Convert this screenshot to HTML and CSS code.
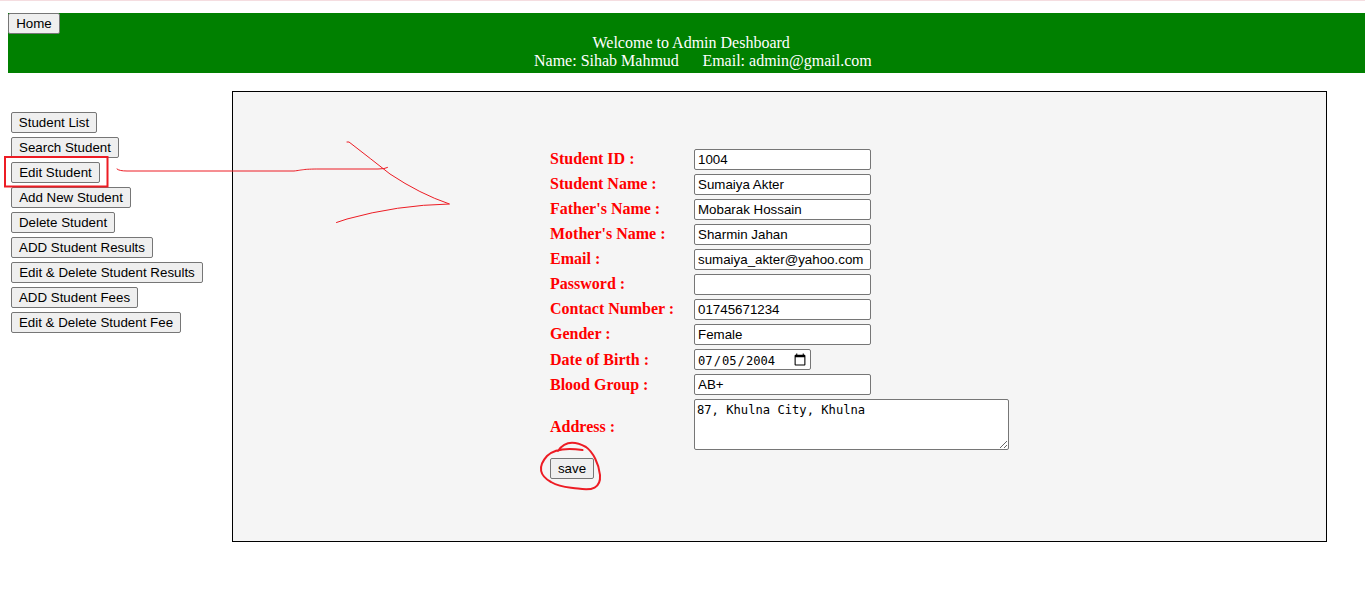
FILE: index.html
```html
<!DOCTYPE html>
<html lang="en">
<head>
<meta charset="utf-8">
<title>Admin Dashboard</title>
<link rel="stylesheet" href="styles.css">
</head>
<body>
<header class="banner">
  <button class="btn home">Home</button>
  <div class="welcome">Welcome to Admin Deshboard</div>
  <div class="identity"><span>Name: Sihab Mahmud</span><span>Email: admin@gmail.com</span></div>
</header>
<div class="layout">
  <nav class="menu">
    <button class="btn w-list">Student List</button>
    <button class="btn w-search">Search Student</button>
    <button class="btn w-edit">Edit Student</button>
    <button class="btn w-add">Add New Student</button>
    <button class="btn w-delete">Delete Student</button>
    <button class="btn w-results">ADD Student Results</button>
    <button class="btn w-edit-results">Edit &amp; Delete Student Results</button>
    <button class="btn w-fees">ADD Student Fees</button>
    <button class="btn w-edit-fee">Edit &amp; Delete Student Fee</button>
  </nav>
  <main class="panel">
    <form class="form">
      <label for="sid">Student ID :</label><input id="sid" class="field" value="1004">
      <label for="name">Student Name :</label><input id="name" class="field" value="Sumaiya Akter">
      <label for="father">Father's Name :</label><input id="father" class="field" value="Mobarak Hossain">
      <label for="mother">Mother's Name :</label><input id="mother" class="field" value="Sharmin Jahan">
      <label for="email">Email :</label><input id="email" class="field" value="sumaiya_akter@yahoo.com">
      <label for="pass">Password :</label><input id="pass" class="field" type="password">
      <label for="contact">Contact Number :</label><input id="contact" class="field" value="01745671234">
      <label for="gender">Gender :</label><input id="gender" class="field" value="Female">
      <label class="low" for="dob">Date of Birth :</label><input id="dob" class="field date" type="date" value="2004-07-05">
      <label class="low" for="blood">Blood Group :</label><input id="blood" class="field" value="AB+">
      <label class="address-label" for="address">Address :</label><textarea id="address" class="address">87, Khulna City, Khulna</textarea>
      <button class="btn save" type="button">save</button>
    </form>
  </main>
</div>
<svg class="marks" viewBox="0 0 1365 593" aria-hidden="true">
  <rect class="box" x="5" y="157" width="102.500" height="29.500"/>
  <path class="thin" d="M117 169 Q119 171 127 171 H294 C303 170 302 169 320 169 H378 Q385 169 387.500 167.500"/>
  <path class="thin" d="M347 142 H349 Q371 159 390 174 Q420 194 449.500 204 Q397 205 347 219 L336.500 222.500"/>
  <path class="ring" d="M582.500 450 C565 447.500 554 449 547 456 C537 467 540 476 551 482 C561 488 568 487 578 488.500 C592 491 601 488 600 475 C599 464 593 452 586 447 C573 440 564 442 558 451"/>
</svg>
</body>
</html>
```
FILE: styles.css
```css
* { box-sizing: border-box; }
body {
  margin: 0;
  height: 593px;
  overflow: hidden;
  border-top: 1px solid #f5dde0;
  background: #fff;
  font: 16px/18px "Liberation Serif", "Times New Roman", serif;
}
.banner {
  margin: 12px 0 0 8px;
  height: 60px;
  background: #008000;
  color: #fff;
}
.btn {
  display: block;
  height: 21px;
  padding: 0;
  border: 1px solid #767676;
  border-radius: 2px;
  background: #efefef;
  color: #000;
  font: 13.333px/19px "Liberation Sans", Arial, sans-serif;
  white-space: nowrap;
}
.home { width: 52px; }
.welcome { padding-left: 584.500px; }
.identity {
  display: flex;
  gap: 23.500px;
  padding-left: 526px;
}
.layout {
  display: flex;
  align-items: flex-start;
  padding-top: 18px;
}
.menu {
  display: flex;
  flex-direction: column;
  gap: 4px;
  width: 232px;
  padding: 21px 0 0 11px;
}
.w-list { width: 86px; }
.w-search { width: 108px; }
.w-edit { width: 89px; }
.w-add { width: 120px; }
.w-delete { width: 104px; }
.w-results { width: 142px; }
.w-edit-results { width: 192px; }
.w-fees { width: 127px; }
.w-edit-fee { width: 170px; }
.panel {
  width: 1095px;
  height: 451px;
  padding: 57px 0 0 317px;
  border: 1px solid #000;
  background: #f5f5f5;
}
.form {
  display: grid;
  grid-template-columns: 144px 315px;
  grid-template-rows: repeat(10, 21px) 51px 21px;
  row-gap: 4px;
  color: #f00;
  font-weight: bold;
}
.form label { padding-top: 1px; }
.form .low { padding-top: 2px; }
.form .address-label { padding-top: 19px; }
.field, .address {
  margin: 0;
  border: 1px solid #767676;
  border-radius: 2px;
  background: #fff;
  color: #000;
}
.field {
  width: 177px;
  height: 21px;
  padding: 1px 3px;
  font: 13.333px "Liberation Sans", Arial, sans-serif;
}
.date {
  width: 117px;
  padding: 2px 1px 0 2px;
  font: 12.150px "DejaVu Sans Mono", monospace;
}
.date::-webkit-calendar-picker-indicator {
  width: 14px;
  height: 14px;
  margin-right: 0;
  margin-bottom: 2px;
}
.address {
  display: block;
  width: 315px;
  height: 51px;
  padding: 3px 2px 2px;
  font: 12.150px/15px "DejaVu Sans Mono", monospace;
  resize: both;
}
.save { width: 44px; margin-top: 4px; }
.marks {
  position: absolute;
  left: 0;
  top: 0;
  width: 1365px;
  height: 593px;
  fill: none;
  stroke: #ed1c24;
  stroke-linecap: round;
  pointer-events: none;
}
.box { stroke-width: 2; }
.thin { stroke-width: 1; }
.ring { stroke-width: 2; }
```
